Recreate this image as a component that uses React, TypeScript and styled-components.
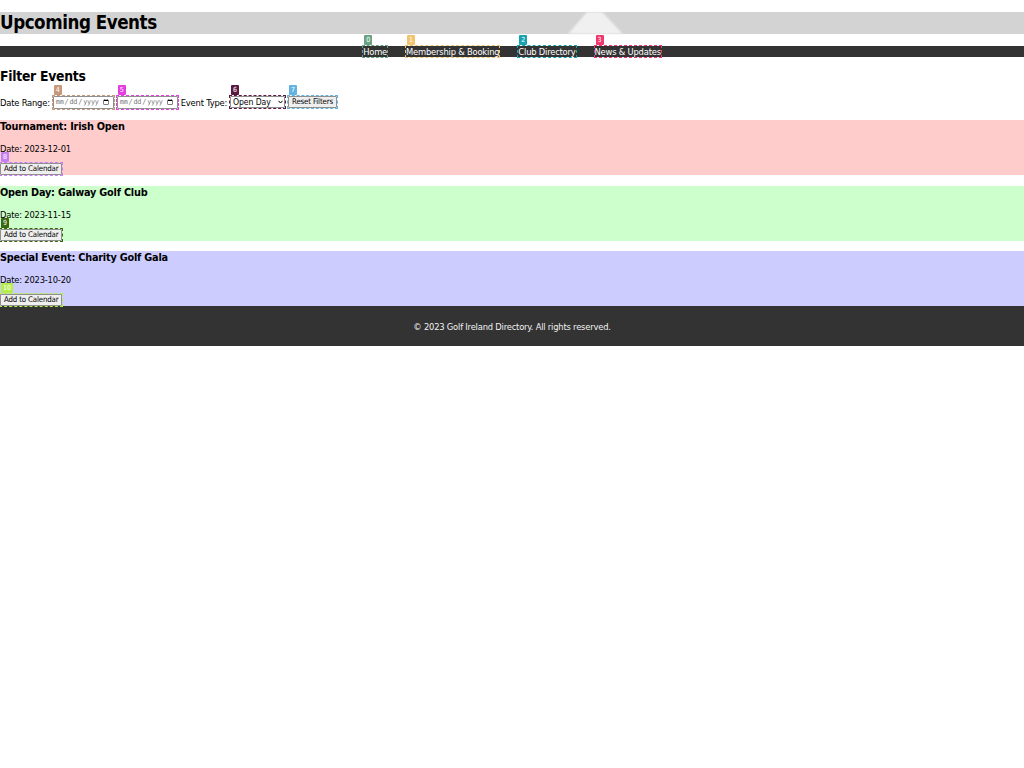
import React from "react";
import styled, { createGlobalStyle } from "styled-components";

const Global = createGlobalStyle`
  html, body { margin: 0; padding: 0; background: #fff; }
  body {
    font-family: "DejaVu Sans Condensed", "DejaVu Sans", sans-serif;
    font-stretch: condensed;
    font-size: 9.3px;
    letter-spacing: -0.2px;
    color: #000;
  }
`;

const Header = styled.header`
  position: relative;
`;

const Title = styled.h1`
  margin: 12px 0;
  font-size: 18.6px;
  letter-spacing: -0.45px;
  line-height: 22px;
  font-weight: bold;
  background: #d3d3d3;
`;

const Glow = styled.svg`
  position: absolute;
  left: 560px;
  top: 0;
  width: 72px;
  height: 22px;
  pointer-events: none;
  filter: blur(0.9px);
`;

const Nav = styled.nav`
  display: flex;
  justify-content: center;
  gap: 19px;
  background: #333;
  height: 11px;
  line-height: 11px;
`;

const NavLink = styled.a`
  color: #fff;
  text-decoration: none;
  font-size: 9.3px;
  display: block;
`;

const Mark = styled.span<{ $c: string }>`
  position: relative;
  display: inline-flex;
  outline: 1px dashed ${(p) => p.$c};
`;

const Badge = styled.span<{ $c: string }>`
  position: absolute;
  left: 1px;
  bottom: calc(100% + 1px);
  min-width: 8px;
  height: 10px;
  padding: 0 2px;
  box-sizing: border-box;
  background: ${(p) => p.$c};
  color: #fff;
  font-size: 7px;
  letter-spacing: 0;
  line-height: 10px;
  text-align: center;
  font-family: "DejaVu Sans", sans-serif;
  border-radius: 1px;
`;

const Main = styled.main`
  display: flex;
  flex-direction: column;
`;

const SectionTitle = styled.h2`
  margin: 11px 0;
  font-size: 13.8px;
  letter-spacing: -0.25px;
  line-height: 16px;
  font-weight: bold;
`;

const FilterRow = styled.div`
  display: flex;
  align-items: center;
  gap: 3px;
  height: 14px;
`;

const Label = styled.label`
  font-size: 9.3px;
`;

const DateInput = styled.input`
  box-sizing: border-box;
  width: 61px;
  height: 13px;
  padding: 0 1px;
  margin: 0;
  font-family: "DejaVu Sans Mono", monospace;
  font-size: 6.8px;
  letter-spacing: -0.2px;
  color: #777;
  border: 1px solid #8f8f8f;
  border-radius: 1px;
  background: #fff;
`;

const SelectBox = styled.select`
  box-sizing: border-box;
  width: 55px;
  height: 12px;
  padding: 0 8px 0 2px;
  margin: 0;
  appearance: none;
  font-family: "DejaVu Sans Condensed", "DejaVu Sans", sans-serif;
  font-stretch: condensed;
  font-size: 8.6px;
  letter-spacing: -0.1px;
  line-height: 10px;
  border: 1px solid #8f8f8f;
  border-radius: 1px;
  background: #fff;
  color: #000;
`;

const Chevron = styled.svg`
  position: absolute;
  right: 2px;
  top: 4px;
  width: 5px;
  height: 4px;
  pointer-events: none;
`;

const Button = styled.button`
  box-sizing: border-box;
  height: 12px;
  padding: 0 3px;
  margin: 0;
  font-family: "DejaVu Sans Condensed", "DejaVu Sans", sans-serif;
  font-stretch: condensed;
  font-size: 7.8px;
  letter-spacing: -0.15px;
  line-height: 10px;
  color: #000;
  background: #efefef;
  border: 1px solid #8f8f8f;
  border-radius: 1px;
`;

const Events = styled.section`
  display: flex;
  flex-direction: column;
  gap: 10.5px;
  margin-top: 11px;
`;

const Card = styled.article<{ $bg: string }>`
  display: flex;
  flex-direction: column;
  align-items: flex-start;
  background: ${(p) => p.$bg};
  height: 55px;
  padding-top: 1px;
  box-sizing: border-box;
`;

const CardTitle = styled.h3`
  margin: 0 0 10px;
  font-size: 10.8px;
  letter-spacing: -0.2px;
  line-height: 12px;
  font-weight: bold;
`;

const CardDate = styled.p`
  margin: 0 0 9px;
  font-size: 9.3px;
  line-height: 11px;
`;

const Footer = styled.footer`
  background: #333;
  color: #f2f2f2;
  height: 40px;
  display: flex;
  align-items: center;
  justify-content: center;
  font-size: 9.3px;
`;

const Marked: React.FC<{ n: number; c: string; children: React.ReactNode }> = ({ n, c, children }) => (
  <Mark $c={c}>
    <Badge $c={c}>{n}</Badge>
    {children}
  </Mark>
);

const navItems = [
  { label: "Home", c: "#6aa383" },
  { label: "Membership & Booking", c: "#f2c46e" },
  { label: "Club Directory", c: "#17a2b0" },
  { label: "News & Updates", c: "#f0376e" },
];

const events = [
  { title: "Tournament: Irish Open", date: "2023-12-01", bg: "#ffcccc", c: "#c57ff5" },
  { title: "Open Day: Galway Golf Club", date: "2023-11-15", bg: "#ccffcc", c: "#3b6510" },
  { title: "Special Event: Charity Golf Gala", date: "2023-10-20", bg: "#ccccff", c: "#b5ee4b" },
];

export default function App() {
  return (
    <>
      <Global />
      <Header>
        <Title>Upcoming Events</Title>
        <Glow viewBox="0 0 72 22">
          <polygon points="27,0 42,0 63,22 8,22" fill="#f0f0f0" />
        </Glow>
        <Nav>
          {navItems.map((it, i) => (
            <Marked key={it.label} n={i} c={it.c}>
              <NavLink href="#">{it.label}</NavLink>
            </Marked>
          ))}
        </Nav>
      </Header>
      <Main>
        <SectionTitle>Filter Events</SectionTitle>
        <FilterRow>
          <Label>Date Range:</Label>
          <Marked n={4} c="#c9987a">
            <DateInput type="date" />
          </Marked>
          <Marked n={5} c="#e43de0">
            <DateInput type="date" />
          </Marked>
          <Label>Event Type:</Label>
          <Marked n={6} c="#5c1940">
            <SelectBox defaultValue="open">
              <option value="open">Open Day</option>
              <option value="tournament">Tournament</option>
              <option value="special">Special Event</option>
            </SelectBox>
            <Chevron viewBox="0 0 5 4">
              <polyline points="0.5,0.8 2.5,3 4.5,0.8" fill="none" stroke="#000" strokeWidth="1" />
            </Chevron>
          </Marked>
          <Marked n={7} c="#62b3e0">
            <Button>Reset Filters</Button>
          </Marked>
        </FilterRow>
        <Events>
          {events.map((e, i) => (
            <Card key={e.title} $bg={e.bg}>
              <CardTitle>{e.title}</CardTitle>
              <CardDate>Date: {e.date}</CardDate>
              <Marked n={8 + i} c={e.c}>
                <Button>Add to Calendar</Button>
              </Marked>
            </Card>
          ))}
        </Events>
      </Main>
      <Footer>© 2023 Golf Ireland Directory. All rights reserved.</Footer>
    </>
  );
}
